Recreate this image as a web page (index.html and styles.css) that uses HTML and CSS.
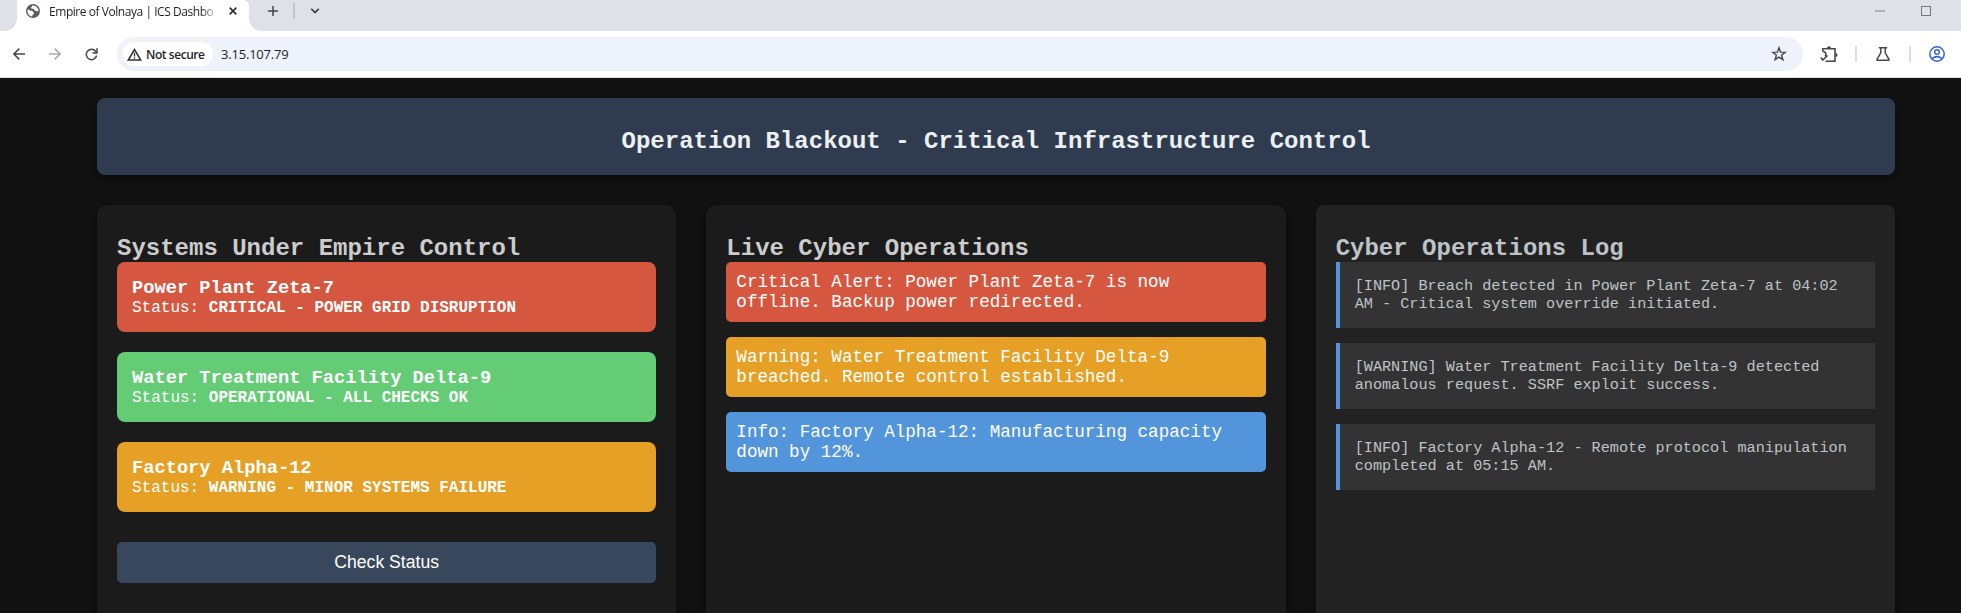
FILE: index.html
```html
<!DOCTYPE html>
<html lang="en">
<head>
<meta charset="utf-8">
<title>Empire of Volnaya | ICS Dashboard</title>
<link rel="stylesheet" href="styles.css">
</head>
<body>
<div class="browser">
  <div class="tabstrip">
    <div class="tab">
      <svg class="favicon" width="14" height="14" viewBox="0 0 14 14"><circle cx="7" cy="7" r="7" fill="#5a5e63"/><path d="M2 5.2C3 5.6 4.200 6.800 5.600 6.800c1.200 0 1 1.500 2 1.700 1 .2.200 1.700-1 2.400L6 12.600C3.400 12.200 1.400 9.800 1.400 7z" fill="#fff"/><path d="M6.200 1.600C6 3 4.800 3.200 5.200 4.200c.5 1 2 .2 2.800 1 .8.900 1.200 1.900 2.200 1.900.9 0 1.300.5 2.300.4C12.700 4.400 10.200 1.400 7 1.400z" fill="#fff"/></svg>
      <span class="tab-title">Empire of Volnaya | ICS Dashbo</span>
      <svg class="tab-close" width="8" height="8" viewBox="0 0 8 8"><path d="M.7.7l6.600 6.600M7.300.7L.7 7.300" stroke="#303030" stroke-width="1.700"/></svg>
    </div>
    <svg class="new-tab" width="10" height="10" viewBox="0 0 10 10"><path d="M5 0v10M0 5h10" stroke="#444746" stroke-width="1.500"/></svg>
    <span class="strip-divider"></span>
    <svg class="tab-search" width="10" height="6" viewBox="0 0 10 6"><path d="M1.200.9L5 4.500 8.800.9" fill="none" stroke="#444746" stroke-width="1.800"/></svg>
    <div class="window-controls">
      <span class="minimize"></span>
      <span class="maximize"></span>
    </div>
  </div>
  <div class="toolbar">
    <svg class="back" width="12" height="12" viewBox="0 0 12 12"><path d="M12 6H1M6.300.6L.9 6l5.400 5.400" fill="none" stroke="#474747" stroke-width="1.500"/></svg>
    <svg class="forward" width="12" height="12" viewBox="0 0 12 12"><path d="M0 6h11M5.700.6L11.100 6l-5.400 5.400" fill="none" stroke="#a8a8a8" stroke-width="1.500"/></svg>
    <svg class="reload" width="13" height="13" viewBox="0 0 13 13"><path d="M11.600 7.500A5.200 5.200 0 1 1 10.600 3.200L11.800 4.600M12 .3v4.600H7.600" fill="none" stroke="#474747" stroke-width="1.500"/></svg>
    <div class="omnibox">
      <div class="chip">
        <svg width="15" height="13" viewBox="0 0 15 13"><path d="M7.500 1.500L1.300 12h12.400z" fill="none" stroke="#303030" stroke-width="1.500"/><path d="M7.500 5v3.500M7.500 9.300v1.400" stroke="#303030" stroke-width="1.300"/></svg>
        <span class="chip-label">Not secure</span>
      </div>
      <span class="url">3.15.107.79</span>
      <svg class="star" width="16" height="16" viewBox="0 0 16 16"><path d="M8 1.800l1.600 4.300 4.700.2-3.700 2.900 1.300 4.500L8 11.200l-3.900 2.500 1.300-4.500L1.700 6.300l4.700-.2z" fill="none" stroke="#474747" stroke-width="1.400"/></svg>
    </div>
    <svg class="puzzle" width="18" height="17" viewBox="0 0 18 17"><path d="M2.800 5.500V2.800H15V15.300H5.500M2.800 5.500C6.500 5.500 6.500 9.500 5 10.500M.8 11.500l2 2.500L7.500 9.500" fill="none" stroke="#474747" stroke-width="1.600"/><path d="M7 2.200a2 2 0 0 1 4 0zM15.500 7a2 2 0 0 1 0 4z" fill="#474747"/></svg>
    <span class="tool-divider"></span>
    <svg class="flask" width="14" height="14" viewBox="0 0 14 14"><path d="M2.800.8h8.400M4.800.8v5L1 12.300q-.3.900.7.900h10.600q1 0 .7-.9L9.200 5.800v-5" fill="none" stroke="#474747" stroke-width="1.500"/></svg>
    <span class="tool-divider"></span>
    <svg class="profile" width="16" height="16" viewBox="0 0 16 16"><g fill="none" stroke="#3563cf" stroke-width="1.500"><circle cx="8" cy="8" r="7.200"/><circle cx="8" cy="6" r="2.300"/><path d="M2.800 12.800Q8 8.400 13.200 12.800"/></g></svg>
  </div>
</div>
<main class="page">
  <header class="banner"><h1 class="heading">Operation Blackout - Critical Infrastructure Control</h1></header>
  <div class="panels">
    <section class="panel">
      <h2 class="heading">Systems Under Empire Control</h2>
      <div class="system critical"><h3>Power Plant Zeta-7</h3><p>Status: <b>CRITICAL - POWER GRID DISRUPTION</b></p></div>
      <div class="system ok"><h3>Water Treatment Facility Delta-9</h3><p>Status: <b>OPERATIONAL - ALL CHECKS OK</b></p></div>
      <div class="system warning"><h3>Factory Alpha-12</h3><p>Status: <b>WARNING - MINOR SYSTEMS FAILURE</b></p></div>
      <button class="check" type="button">Check Status</button>
    </section>
    <section class="panel">
      <h2 class="heading">Live Cyber Operations</h2>
      <div class="alert critical">Critical Alert: Power Plant Zeta-7 is now offline. Backup power redirected.</div>
      <div class="alert warning">Warning: Water Treatment Facility Delta-9 breached. Remote control established.</div>
      <div class="alert info">Info: Factory Alpha-12: Manufacturing capacity down by 12%.</div>
    </section>
    <section class="panel log">
      <h2 class="heading">Cyber Operations Log</h2>
      <div class="entry">[INFO] Breach detected in Power Plant Zeta-7 at 04:02 AM - Critical system override initiated.</div>
      <div class="entry">[WARNING] Water Treatment Facility Delta-9 detected anomalous request. SSRF exploit success.</div>
      <div class="entry">[INFO] Factory Alpha-12 - Remote protocol manipulation completed at 05:15 AM.</div>
    </section>
  </div>
</main>
</body>
</html>
```
FILE: styles.css
```css
* { box-sizing: border-box; }
body {
  margin: 0;
  height: 613px;
  overflow: hidden;
  display: flex;
  flex-direction: column;
  background: #121212;
  font-family: "Liberation Mono", "Courier New", monospace;
}
h1, h2, h3, p { margin: 0; }
svg { display: block; flex: none; }

/* Browser chrome */
.browser {
  flex: none;
  background: #fff;
  border-bottom: 1px solid #dcdcdc;
  font-family: "Open Sans", "Noto Sans", sans-serif;
  color: #1f1f1f;
}
.tabstrip {
  height: 31px;
  padding-left: 17px;
  display: flex;
  align-items: flex-start;
  background: #dee1e8;
}
.tab {
  position: relative;
  width: 232px;
  height: 31px;
  padding-left: 9px;
  display: flex;
  background: #fff;
  border-radius: 0 6px 0 0;
}
.tab::before, .tab::after {
  content: "";
  position: absolute;
  bottom: 0;
  width: 12px;
  height: 12px;
}
.tab::before { left: -12px; background: radial-gradient(circle at 0 0, transparent 11.5px, #fff 12px); }
.tab::after { right: -12px; background: radial-gradient(circle at 100% 0, transparent 11.5px, #fff 12px); }
.favicon { margin-top: 4px; }
.tab-title {
  width: 170px;
  margin-left: 9px;
  white-space: nowrap;
  font-size: 12px;
  line-height: 24px;
  letter-spacing: -0.45px;
  -webkit-mask-image: linear-gradient(to right, #000 152px, transparent 170px);
  mask-image: linear-gradient(to right, #000 152px, transparent 170px);
}
.tab-close { margin: 7px 0 0 10px; }
.new-tab { margin: 6px 0 0 19px; }
.strip-divider { width: 2px; height: 16px; margin: 3px 0 0 15px; background: #c4c5c8; }
.tab-search { margin: 8px 0 0 15px; }
.window-controls { margin: 6px 30px 0 auto; display: flex; gap: 36px; }
.minimize { width: 10px; height: 2px; margin-top: 4px; background: #aeb1b5; }
.maximize { width: 10px; height: 10px; border: 1px solid #777a7e; }
.toolbar {
  height: 46px;
  padding: 0 16px 0 13px;
  display: flex;
  align-items: center;
}
.forward { margin-left: 24px; }
.reload { margin-left: 24px; }
.omnibox {
  flex: 1;
  height: 34px;
  margin-left: 19px;
  padding: 0 16px 0 5px;
  display: flex;
  align-items: center;
  background: #edf2fb;
  border-radius: 17px;
}
.chip {
  width: 91px;
  height: 24px;
  padding-left: 5px;
  display: flex;
  align-items: center;
  gap: 4px;
  background: #fff;
  border-radius: 12px;
}
.chip-label { font-size: 12px; font-weight: 600; letter-spacing: -0.45px; white-space: nowrap; }
.url { margin-left: 8px; font-size: 13px; letter-spacing: -0.2px; }
.star { margin-left: auto; }
.puzzle { margin-left: 17px; }
.tool-divider { width: 2px; height: 16px; background: #d3e0fb; }
.puzzle + .tool-divider { margin-left: 17px; }
.flask { margin-left: 19px; }
.flask + .tool-divider { margin-left: 19px; }
.profile { margin-left: 18px; }

/* Dashboard */
.page {
  flex: 1;
  min-height: 0;
  padding: 20px 66px 0 97px;
  display: flex;
  flex-direction: column;
  gap: 30px;
}
.heading { font-size: 24px; line-height: 27px; font-weight: 700; }
.banner {
  flex: none;
  padding: 30px 0 20px;
  text-align: center;
  color: #ecf0f1;
  background: #2f3b4f;
  border-radius: 8px;
  box-shadow: 0 4px 10px rgba(0, 0, 0, 0.5);
}
.panels {
  flex: 1;
  display: grid;
  grid-template-columns: repeat(3, 1fr);
  gap: 30px;
}
.panel {
  padding: 30px 20px 0;
  color: #ccc;
  background: #1b1b1b;
  border-radius: 10px 10px 0 0;
  box-shadow: 0 4px 12px rgba(0, 0, 0, 0.5);
}
.log { color: #bdc3c7; background: #222; border-radius: 8px 8px 0 0; }
.critical { background: #d6573f; }
.ok { background: #63cc74; }
.warning { background: #e5a025; }
.info { background: #5395db; }
.system {
  height: 70px;
  margin-bottom: 20px;
  padding: 16px 15px 15px;
  color: #fff;
  border-radius: 8px;
}
.system h3 { font-size: 18.72px; line-height: 21px; }
.system p { font-size: 16px; line-height: 18px; }
.check {
  display: block;
  width: 100%;
  height: 41px;
  margin-top: 30px;
  border: 0;
  border-radius: 5px;
  color: #fff;
  background: #39475d;
  font: 17.6px "Liberation Sans", Arial, sans-serif;
}
.alert {
  height: 60px;
  margin-bottom: 15px;
  padding: 10px;
  color: #fff;
  border-radius: 5px;
  font-size: 17.6px;
  line-height: 20px;
}
.entry {
  height: 66px;
  margin-bottom: 15px;
  padding: 15px;
  background: #333;
  border-left: 4px solid #5395db;
  font-size: 15.2px;
  line-height: 18px;
}
```
